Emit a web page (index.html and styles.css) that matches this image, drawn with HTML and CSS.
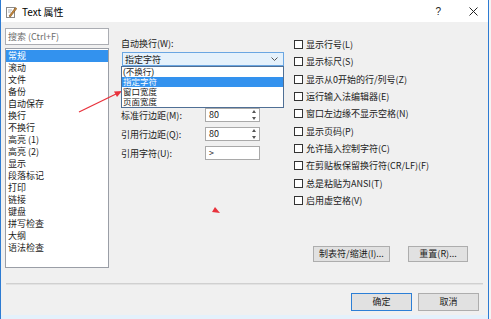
FILE: index.html
```html
<!DOCTYPE html>
<html lang="zh-CN">
<head>
    <meta charset="UTF-8">
    <title>Text 属性</title>
    <link rel="stylesheet" href="styles.css">
</head>
<body>
    <div class="window">
        <!-- Title bar -->
        <div class="titlebar">
            <svg class="app-icon" width="11" height="12" viewBox="0 0 11 12">
                <rect x="0.5" y="1.5" width="8" height="10" fill="#fff" stroke="#8a8a8a"/>
                <line x1="2" y1="4" x2="6" y2="4" stroke="#b0b0b0"/>
                <line x1="2" y1="6" x2="5" y2="6" stroke="#b0b0b0"/>
                <path d="M3 10 L9.5 1.5 L10.8 2.6 L4.3 11 Z" fill="#c58a3a" stroke="#7a4a1a" stroke-width="0.6"/>
            </svg>
            <span class="title">Text 属性</span>
            <span class="help">?</span>
            <svg class="close" width="9" height="9" viewBox="0 0 9 9">
                <path d="M0.5 0.5 L8.5 8.5 M8.5 0.5 L0.5 8.5" stroke="#222" stroke-width="1"/>
            </svg>
        </div>

        <!-- Main area -->
        <div class="main">
            <div class="sidebar">
                <div class="search">搜索 (Ctrl+F)</div>
                <ul class="nav">
                    <li class="active">常规</li>
                    <li>滚动</li>
                    <li>文件</li>
                    <li>备份</li>
                    <li>自动保存</li>
                    <li>换行</li>
                    <li>不换行</li>
                    <li>高亮 (1)</li>
                    <li>高亮 (2)</li>
                    <li>显示</li>
                    <li>段落标记</li>
                    <li>打印</li>
                    <li>链接</li>
                    <li>键盘</li>
                    <li>拼写检查</li>
                    <li>大纲</li>
                    <li>语法检查</li>
                </ul>
            </div>

            <div class="settings">
                <div class="label">自动换行(W):</div>
                <div class="combo-wrap">
                    <div class="combo">
                        <span>指定字符</span>
                        <svg class="chevron" width="7" height="4" viewBox="0 0 7 4">
                            <polyline points="0.5,0.5 3.5,3.5 6.5,0.5" fill="none" stroke="#555" stroke-width="1"/>
                        </svg>
                    </div>
                    <ul class="dropdown">
                        <li>(不换行)</li>
                        <li class="active">指定字符</li>
                        <li>窗口宽度</li>
                        <li>页面宽度</li>
                    </ul>
                </div>

                <div class="field first">
                    <span class="field-label">标准行边距(M):</span>
                    <div class="input spin">80<span class="arrows"><i class="up"></i><i class="down"></i></span></div>
                </div>
                <div class="field">
                    <span class="field-label">引用行边距(Q):</span>
                    <div class="input spin">80<span class="arrows"><i class="up"></i><i class="down"></i></span></div>
                </div>
                <div class="field">
                    <span class="field-label">引用字符(U):</span>
                    <div class="input">&gt;</div>
                </div>
            </div>

            <div class="options">
                <label class="check"><span class="box"></span>显示行号(L)</label>
                <label class="check"><span class="box"></span>显示标尺(S)</label>
                <label class="check"><span class="box"></span>显示从0开始的行/列号(Z)</label>
                <label class="check"><span class="box"></span>运行输入法编辑器(E)</label>
                <label class="check"><span class="box"></span>窗口左边缘不显示空格(N)</label>
                <label class="check"><span class="box"></span>显示页码(P)</label>
                <label class="check"><span class="box"></span>允许插入控制字符(C)</label>
                <label class="check"><span class="box"></span>在剪贴板保留换行符(CR/LF)(F)</label>
                <label class="check"><span class="box"></span>总是粘贴为ANSI(T)</label>
                <label class="check"><span class="box"></span>启用虚空格(V)</label>

                <div class="tools">
                    <button class="btn tab-btn">制表符/缩进(I)...</button>
                    <button class="btn reset-btn">重置(R)...</button>
                </div>
            </div>
        </div>

        <div class="separator"></div>

        <div class="footer">
            <button class="btn default">确定</button>
            <button class="btn">取消</button>
        </div>

        <div class="edge"></div>

        <!-- red annotation marks -->
        <svg class="marks" width="489" height="319" viewBox="0 0 489 319">
            <line x1="78" y1="112" x2="115" y2="94" stroke="#e8323c" stroke-width="1.3"/>
            <polygon points="121,91 113,91.5 116,97" fill="#e8323c"/>
            <polygon points="214,207 219,213 211,212" fill="#e8323c"/>
        </svg>
    </div>
</body>
</html>
```

FILE: styles.css
```css
/* Page and dialog frame */
body {
    margin: 0;
    width: 491px;
    height: 319px;
    background-color: #f4f4f4;
    font-family: "Noto Sans CJK SC", "Noto Sans", sans-serif;
    font-size: 9px;
    color: #1a1a1a;
    overflow: hidden;
}

.window {
    position: relative;
    box-sizing: border-box;
    width: 489px;
    height: 319px;
    background-color: #f0f0f0;
    border-left: 1px solid #2d7bd2;
    border-right: 1px solid #2d7bd2;
    display: flex;
    flex-direction: column;
}

/* Title bar */
.titlebar {
    height: 22px;
    background-color: #ffffff;
    display: flex;
    align-items: center;
    flex-shrink: 0;
}

.app-icon {
    margin-left: 5px;
    margin-top: 1px;
}

.title {
    margin-left: 5px;
    font-size: 10px;
    color: #000;
}

.help {
    margin-left: auto;
    font-family: "Liberation Sans", sans-serif;
    font-size: 10px;
    color: #222;
}

.close {
    margin-left: 28px;
    margin-right: 10px;
}

/* Main area */
.main {
    height: 261px;
    display: flex;
    padding: 6px 0 0 4px;
    box-sizing: border-box;
    flex-shrink: 0;
}

.sidebar {
    width: 104px;
    display: flex;
    flex-direction: column;
}

.search {
    box-sizing: border-box;
    height: 17px;
    border: 1px solid #abadb3;
    background-color: #fff;
    color: #6d6d6d;
    padding-left: 2px;
    line-height: 15px;
}

.nav {
    list-style: none;
    margin: 3px 0 0 0;
    padding: 1px 0 0 0;
    box-sizing: border-box;
    height: 220px;
    border: 1px solid #9a9ea6;
    background-color: #fff;
}

.nav li {
    height: 12px;
    line-height: 12px;
    padding-left: 2px;
}

.nav li.active {
    background-color: #3392ee;
    color: #fff;
}

/* Middle column */
.settings {
    width: 164px;
    margin-left: 12px;
    padding-top: 10px;
}

.label {
    line-height: 12px;
}

.combo-wrap {
    position: relative;
    margin: 2px 0 0 1px;
    width: 162px;
}

.combo {
    box-sizing: border-box;
    height: 14px;
    border: 1px solid #6aa6e2;
    background-color: #e5f1fb;
    display: flex;
    align-items: center;
    padding: 0 5px 0 2px;
}

.chevron {
    margin-left: auto;
}

.dropdown {
    position: absolute;
    top: 14px;
    left: -1px;
    width: 163px;
    box-sizing: border-box;
    margin: 0;
    padding: 0;
    list-style: none;
    border: 1px solid #4f6f95;
    background-color: #fff;
    z-index: 2;
}

.dropdown li {
    height: 10px;
    line-height: 10px;
    font-family: "Liberation Sans", "Noto Sans CJK SC", sans-serif;
    font-size: 8.5px;
    padding-left: 1px;
}

.dropdown li.active {
    background-color: #3392ee;
    color: #fff;
}

.field {
    display: flex;
    align-items: center;
    height: 14px;
    margin-top: 5px;
}

.field.first {
    margin-top: 42px;
}

.field-label {
    width: 84px;
}

.input {
    position: relative;
    box-sizing: border-box;
    width: 55px;
    height: 14px;
    border: 1px solid #a9a9a9;
    background-color: #fff;
    line-height: 12px;
    padding-left: 3px;
}

.arrows {
    position: absolute;
    right: 1px;
    top: 1px;
    width: 8px;
    height: 10px;
    display: flex;
    flex-direction: column;
    justify-content: space-between;
    align-items: center;
}

.arrows i {
    width: 0;
    height: 0;
    border-left: 2px solid transparent;
    border-right: 2px solid transparent;
}

.arrows .up {
    border-bottom: 3px solid #555;
}

.arrows .down {
    border-top: 3px solid #555;
}

/* Right column */
.options {
    flex: 1;
    margin-left: 9px;
    padding-top: 8px;
    display: flex;
    flex-direction: column;
}

.check {
    display: flex;
    align-items: center;
    height: 17.33px;
}

.box {
    box-sizing: border-box;
    width: 9px;
    height: 9px;
    border: 1px solid #333;
    background-color: #fff;
    margin-right: 3px;
}

.tools {
    display: flex;
    margin-top: 37px;
    padding-left: 19px;
    gap: 18px;
}

.btn {
    box-sizing: border-box;
    height: 16px;
    border: 1px solid #adadad;
    background-color: #e1e1e1;
    font-family: "Noto Sans CJK SC", "Noto Sans", sans-serif;
    font-size: 9px;
    color: #1a1a1a;
    padding: 0;
    line-height: 14px;
}

.tab-btn {
    width: 77px;
}

.reset-btn {
    width: 60px;
}

/* Bottom part */
.separator {
    height: 1px;
    margin: 0 5px;
    border-top: 1px solid #d0d0d0;
    background-color: #e2e2e2;
    flex-shrink: 0;
}

.footer {
    height: 30px;
    display: flex;
    justify-content: flex-end;
    gap: 6px;
    padding: 8px 9px 0 0;
    box-sizing: border-box;
    flex-shrink: 0;
}

.footer .btn {
    width: 61px;
    height: 18px;
    line-height: 16px;
}

.footer .default {
    border-color: #2c7fd6;
}

.edge {
    flex: 1;
    background-color: #e4f1fb;
}

/* Annotation overlay */
.marks {
    position: absolute;
    left: 0;
    top: 0;
    pointer-events: none;
}
```
